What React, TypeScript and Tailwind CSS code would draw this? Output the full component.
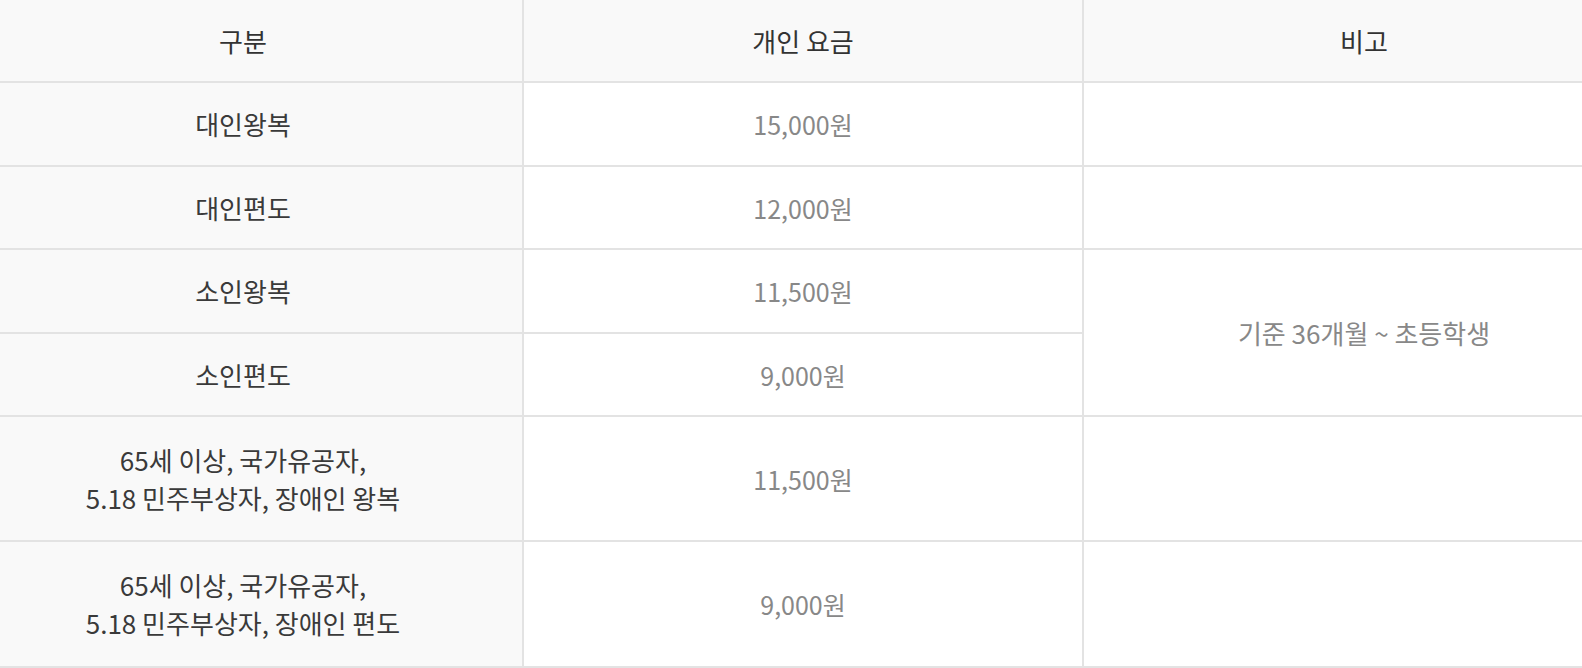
import React from 'react';

const ROWS = [
  { label: ['대인왕복'], price: '15,000원', h: 'h-[84px]' },
  { label: ['대인편도'], price: '12,000원', h: 'h-[83px]' },
  { label: ['소인왕복'], price: '11,500원', h: 'h-[84px]' },
  { label: ['소인편도'], price: '9,000원', h: 'h-[83px]' },
  { label: ['65세 이상, 국가유공자,', '5.18 민주부상자, 장애인 왕복'], price: '11,500원', h: 'h-[125px]' },
  { label: ['65세 이상, 국가유공자,', '5.18 민주부상자, 장애인 편도'], price: '9,000원', h: 'h-[126px]' },
];

const App: React.FC = () => {
  return (
    <div
      className="w-[1582px] h-[668px] overflow-hidden bg-white text-[26px] leading-[38px]"
      style={{ fontFamily: '"Noto Sans CJK KR", "Noto Sans", sans-serif' }}
    >
      {/* 표는 화면보다 넓어서 좌우가 잘려 보임 */}
      <div className="-ml-[36px] w-[1680px] grid grid-cols-3">
        <div className="h-[83px] flex items-center justify-center bg-[#f9f9f9] border-b-2 border-r-2 border-[#e3e3e3] text-[#333]">구분</div>
        <div className="h-[83px] flex items-center justify-center bg-[#f9f9f9] border-b-2 border-r-2 border-[#e3e3e3] text-[#333]">개인 요금</div>
        <div className="h-[83px] flex items-center justify-center bg-[#f9f9f9] border-b-2 border-[#e3e3e3] text-[#333]">비고</div>

        {ROWS.map((row, i) => (
          <React.Fragment key={i}>
            <div className={`${row.h} flex flex-col items-center justify-center bg-[#f9f9f9] border-b-2 border-r-2 border-[#e3e3e3] text-[#3a3a3a] text-center`}>
              {row.label.map(l => (
                <span key={l}>{l}</span>
              ))}
            </div>
            <div className={`${row.h} flex items-center justify-center border-b-2 border-r-2 border-[#e3e3e3] text-[#888] text-[25px]`}>
              {row.price}
            </div>
            {i === 2 && (
              <div className="row-span-2 flex items-center justify-center border-b-2 border-[#e3e3e3] text-[#888]">
                기준 36개월 ~ 초등학생
              </div>
            )}
            {i !== 2 && i !== 3 && <div className={`${row.h} border-b-2 border-[#e3e3e3]`} />}
          </React.Fragment>
        ))}
      </div>
    </div>
  );
};

export default App;
